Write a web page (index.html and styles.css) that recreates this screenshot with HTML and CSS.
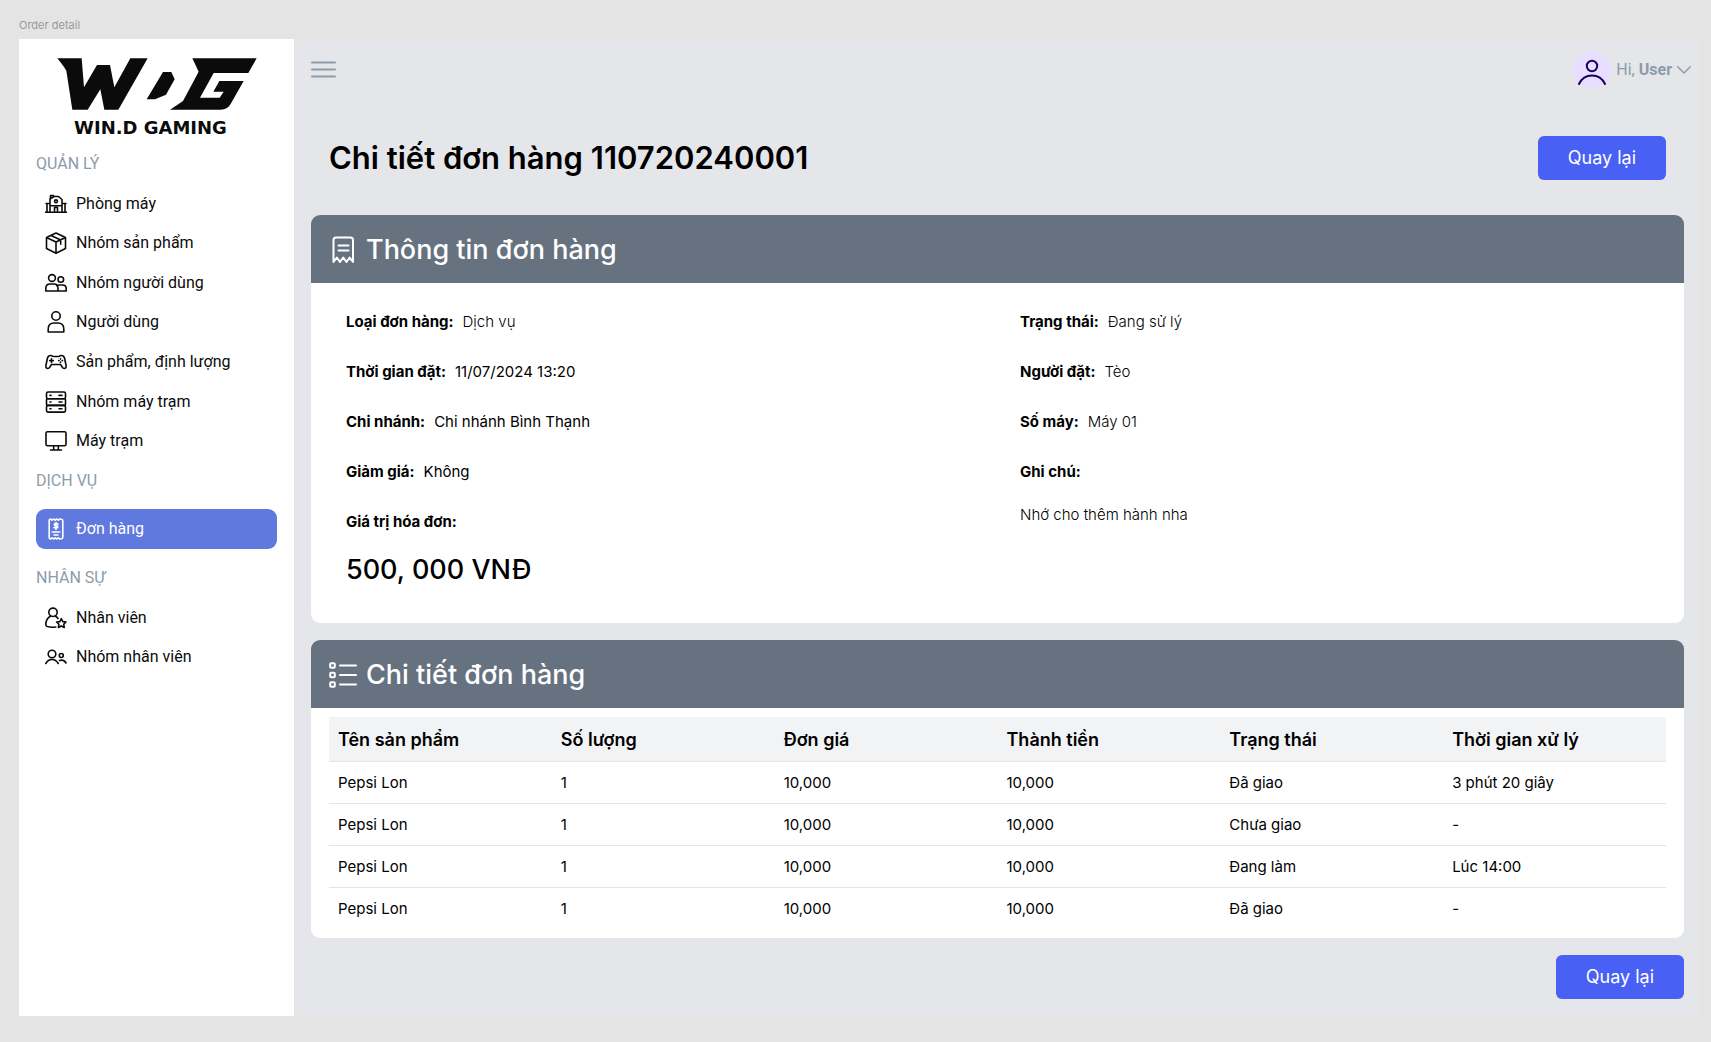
FILE: index.html
```html
<!DOCTYPE html>
<html lang="vi">
<head>
<meta charset="utf-8">
<meta name="viewport" content="width=device-width, initial-scale=1">
<title>Order detail</title>
<link rel="stylesheet" href="styles.css">
</head>
<body>
<div class="frame-label">Order detail</div>
<div class="frame">
  <aside class="sidebar">
    <div class="logo">
      <svg class="logo-mark" viewBox="169 174 600 156" aria-hidden="true">
        <path d="M170 175H243L250 262 289 195H328L341 262 389 175H441L353 329H311L299 268 261 329H215L197 212Q190 200 170 175Z"/>
        <path d="M487 216H512L522 238 496 284 463 298H438Z"/>
        <path d="M575 175H768L743 219H639L598 293H657L669 275H638L656 243H729L692 308Q682 329 660 329H508L547 303 594 215Z"/>
      </svg>
      <span class="logo-text">WIN.D GAMING</span>
    </div>
    <nav class="nav">
      <h2 class="nav-title">QUẢN LÝ</h2>
      <ul class="nav-list nav-list-manage">
        <li><a class="nav-item" href="#"><svg class="icon" viewBox="0 0 22 22"><path d="M1 10.500h4M17 10.500h4M0 19.200h22M2 10.500V19M5 8v11M17 8v11M20 10.500V19M5 8.500V6l4-2.500h4.500L17 6.500v2M5.500 6V2.500h3V4M9.500 19v-4.500h3V19M5 12.700h12"/><circle cx="11" cy="8.300" r="1.400"/></svg>Phòng máy</a></li>
        <li><a class="nav-item" href="#"><svg class="icon" viewBox="0 0 22 22"><path d="M11 1l9.500 4.500v11L11 21.200 1.500 16.500v-11zM1.500 5.500L11 10l9.500-4.500M11 10v11M6 3.400l9.700 4.500v4.300"/></svg>Nhóm sản phẩm</a></li>
        <li><a class="nav-item" href="#"><svg class="icon" viewBox="0 0 22 22"><circle cx="7" cy="6" r="3.400"/><circle cx="15.800" cy="7.500" r="2.800"/><path d="M.8 19v-2.500Q.8 12 5 12h4q4 0 4 4.500V19zM13 19h8.200v-2.500q0-3.500-3.700-3.500h-4.300q-1 .2-1.400.8"/></svg>Nhóm người dùng</a></li>
        <li><a class="nav-item" href="#"><svg class="icon" viewBox="0 0 22 22"><circle cx="11" cy="5" r="4.200"/><path d="M3.200 21v-3q0-6 6-6h3.600q6 0 6 6v3z"/></svg>Người dùng</a></li>
        <li><a class="nav-item" href="#"><svg class="icon" viewBox="0 0 22 22"><path d="M5.500 4.500q1.500 0 2.500 1h6q1-1 2.500-1 2.200 0 3 2.500l1.500 7q.5 3.500-1.600 3.500-1.400 0-2.400-1.700L15.500 13.500h-9L5 15.800q-1 1.700-2.400 1.700-2.100 0-1.600-3.500l1.500-7q.8-2.500 3-2.500zM6.500 7.800v3.600M4.700 9.600h3.600"/><path d="M15.500 7.700v.4M15.500 11.100v.4M13.700 9.600h.4M17.100 9.600h.4"/></svg>Sản phẩm, định lượng</a></li>
        <li><a class="nav-item" href="#"><svg class="icon" viewBox="0 0 22 22"><rect x="1.500" y="1" width="19" height="6.700" rx="1.500"/><rect x="1.500" y="7.700" width="19" height="6.700" rx="1"/><rect x="1.500" y="14.400" width="19" height="6.700" rx="1.500"/><path d="M5 4.400h1M14 4.400h3M5 11h1M14 11h3M5 17.700h1M14 17.700h3"/></svg>Nhóm máy trạm</a></li>
        <li><a class="nav-item" href="#"><svg class="icon" viewBox="0 0 22 22"><rect x="1" y="1.700" width="20" height="14" rx="1.500"/><path d="M8.700 15.700v4M13.300 15.700v4M5.500 20h11"/></svg>Máy trạm</a></li>
      </ul>
      <h2 class="nav-title">DỊCH VỤ</h2>
      <ul class="nav-list nav-list-service">
        <li><a class="nav-item active" href="#" aria-current="page"><svg class="icon" viewBox="0 0 22 22"><path d="M4.200 2.500Q4.200 1 5.500 1l1.600 1.200L8.600 1l1.600 1.200L11.800 1l1.500 1.200L14.900 1l1.500.2q1.400.3 1.400 1.800v16q0 1.500-1.400 1.800l-1.500.2-1.600-1.200-1.500 1.200-1.600-1.200L8.600 21l-1.500-1.200L5.500 21q-1.300-.3-1.300-1.500zM7.200 14h7.600M9 17h4M13 6.300Q11 4.800 9.700 5.800q-1 1.300 1.300 1.900 2.600.6 1.500 2Q11 10.800 9 9.400M11 4.500v7"/></svg>Đơn hàng</a></li>
      </ul>
      <h2 class="nav-title">NHÂN SỰ</h2>
      <ul class="nav-list">
        <li><a class="nav-item" href="#"><svg class="icon" viewBox="0 0 22 22"><circle cx="8" cy="5.300" r="4.200"/><path d="M5.600 9Q.8 12 .8 17.500q0 1.500 1.500 2 4 1.200 8.500.5M10.200 9q1.800 1 2.800 2.500M16.300 11.700l1.500 2.900 3.200.4-2.300 2.300.6 3.200-3-1.500-2.900 1.500.5-3.200-2.300-2.300 3.200-.4z"/></svg>Nhân viên</a></li>
        <li><a class="nav-item" href="#"><svg class="icon" viewBox="0 0 22 22"><circle cx="7" cy="8" r="3.800"/><circle cx="16.300" cy="9.500" r="2"/><path d="M.8 17.500q2.200-4 6.200-4t6.200 4M14.500 14.500q4.200-1.500 6.500 2.500"/></svg>Nhóm nhân viên</a></li>
      </ul>
    </nav>
  </aside>

  <main class="main">
    <header class="topbar">
      <button class="menu-button" type="button" aria-label="Menu"><svg viewBox="0 0 25 17"><path d="M1 1.500h23M1 8.500h23M1 15.500h23"/></svg></button>
      <button class="user-button" type="button">
        <span class="avatar"><svg viewBox="0 0 38 38"><circle cx="19" cy="15" r="5.200"/><path d="M6 33q4-8.500 13-8.500t13 8.500"/></svg></span>
        <span class="user-name">Hi, <strong>User</strong></span>
        <svg class="chevron" viewBox="0 0 14 8"><path d="M.7.7L7 7 13.300.7"/></svg>
      </button>
    </header>

    <div class="page-head">
      <h1 class="page-title">Chi tiết đơn hàng 110720240001</h1>
      <button class="button" type="button">Quay lại</button>
    </div>

    <section class="card">
      <h2 class="card-head">
        <svg class="card-icon" viewBox="0 0 28 28"><path d="M4.500 26V4q0-2.500 2.500-2.500h14.500Q24 1.500 24 4v22l-3.400-4.500-3.100 4.500-3.250-4.500-3.250 4.500-3.100-4.500zM9.500 9.500h10M9.500 14.500h10"/></svg>
        Thông tin đơn hàng
      </h2>
      <div class="details">
        <dl class="detail-column">
          <div class="detail"><dt>Loại đơn hàng:</dt><dd class="light">Dịch vụ</dd></div>
          <div class="detail"><dt>Thời gian đặt:</dt><dd>11/07/2024 13:20</dd></div>
          <div class="detail"><dt>Chi nhánh:</dt><dd>Chi nhánh Bình Thạnh</dd></div>
          <div class="detail"><dt>Giảm giá:</dt><dd>Không</dd></div>
          <div class="detail stacked"><dt>Giá trị hóa đơn:</dt><dd class="total">500, 000 VNĐ</dd></div>
        </dl>
        <dl class="detail-column">
          <div class="detail"><dt>Trạng thái:</dt><dd class="light">Đang sử lý</dd></div>
          <div class="detail"><dt>Người đặt:</dt><dd class="light">Tèo</dd></div>
          <div class="detail"><dt>Số máy:</dt><dd class="light">Máy 01</dd></div>
          <div class="detail stacked"><dt>Ghi chú:</dt><dd class="light">Nhớ cho thêm hành nha</dd></div>
        </dl>
      </div>
    </section>

    <section class="card">
      <h2 class="card-head">
        <svg class="card-icon" viewBox="0 0 28 28"><rect x="1.200" y="2.200" width="4.600" height="4.600" rx="1"/><rect x="1.200" y="11.700" width="4.600" height="4.600" rx="1"/><rect x="1.200" y="21.200" width="4.600" height="4.600" rx="1"/><path d="M11 4.500H27M11 14H27M11 23.500H27"/></svg>
        Chi tiết đơn hàng
      </h2>
      <div class="table-wrap">
        <table class="table">
          <thead>
            <tr><th scope="col">Tên sản phẩm</th><th scope="col">Số lượng</th><th scope="col">Đơn giá</th><th scope="col">Thành tiền</th><th scope="col">Trạng thái</th><th scope="col">Thời gian xử lý</th></tr>
          </thead>
          <tbody>
            <tr><td>Pepsi Lon</td><td>1</td><td>10,000</td><td>10,000</td><td>Đã giao</td><td>3 phút 20 giây</td></tr>
            <tr><td>Pepsi Lon</td><td>1</td><td>10,000</td><td>10,000</td><td>Chưa giao</td><td>-</td></tr>
            <tr><td>Pepsi Lon</td><td>1</td><td>10,000</td><td>10,000</td><td>Đang làm</td><td>Lúc 14:00</td></tr>
            <tr><td>Pepsi Lon</td><td>1</td><td>10,000</td><td>10,000</td><td>Đã giao</td><td>-</td></tr>
          </tbody>
        </table>
      </div>
    </section>

    <div class="page-foot">
      <button class="button" type="button">Quay lại</button>
    </div>
  </main>
</div>
</body>
</html>
```
FILE: styles.css
```css
* {
  box-sizing: border-box;
}

body {
  margin: 0;
  padding: 18px 10px 26px 19px;
  background: #e4e4e4;
  color: #000;
  font-family: Inter, "Liberation Sans", sans-serif;
  font-size: 15px;
  line-height: 20px;
}

h1, h2, ul, dl, dd {
  margin: 0;
  padding: 0;
}

button {
  border: 0;
  padding: 0;
  background: none;
  font: inherit;
  cursor: pointer;
}

svg {
  display: block;
  flex: none;
  fill: none;
  stroke: currentColor;
  stroke-linecap: round;
  stroke-linejoin: round;
}

.frame-label {
  height: 21px;
  color: #999;
  font-size: 11px;
  line-height: 14px;
}

.frame {
  display: flex;
  min-height: calc(100vh - 65px);
  background: #e5e6ea;
}

/* Sidebar */

.sidebar {
  flex: none;
  width: 275px;
  padding: 19px 17px;
  background: #fff;
  font-family: Roboto, "Liberation Sans", sans-serif;
}

.logo {
  display: flex;
  flex-direction: column;
  align-items: center;
  color: #0b0b0b;
}

.logo-mark {
  width: 200px;
  height: 52px;
  fill: currentColor;
  stroke: none;
}

.logo-text {
  padding-top: 8px;
  padding-right: 12px;
  font-family: "DejaVu Sans", sans-serif;
  font-size: 18px;
  font-weight: 700;
  line-height: 20px;
}

.nav {
  padding-top: 6px;
}

.nav-title {
  padding-top: 10px;
  color: #8d9bab;
  font-size: 16px;
  font-weight: 400;
  line-height: 20px;
}

.nav-list {
  display: grid;
  grid-auto-rows: 1fr;
  padding-top: 10px;
  list-style: none;
}

.nav-list-manage {
  min-height: 287px;
}

.nav-list-service {
  padding: 18px 0 9px;
}

.nav-item {
  display: flex;
  align-items: center;
  gap: 9px;
  height: 100%;
  min-height: 39px;
  padding: 0 9px;
  border-radius: 9px;
  color: #0b0b0b;
  font-size: 16px;
  text-decoration: none;
}

.nav-item.active {
  min-height: 40px;
  background: #6079df;
  color: #fff;
}

.icon {
  width: 22px;
  height: 22px;
  stroke-width: 1.6;
}

/* Top bar */

.main {
  flex: 1;
  min-width: 0;
  padding: 0 17px 17px;
}

.topbar {
  display: flex;
  align-items: center;
  justify-content: space-between;
  height: 61px;
  color: #8d9bab;
}

.menu-button,
.user-button {
  color: inherit;
}

.menu-button svg {
  width: 25px;
  height: 17px;
  stroke-width: 2;
}

.user-button {
  display: flex;
  align-items: center;
  gap: 5px;
  margin-right: -7px;
  font-family: Roboto, "Liberation Sans", sans-serif;
  font-size: 16px;
}

.user-name strong {
  font-weight: 700;
}

.avatar {
  border-radius: 50%;
  background: #e8deff;
  color: #21005d;
}

.avatar svg {
  width: 38px;
  height: 38px;
  stroke-width: 2;
}

.chevron {
  width: 14px;
  height: 8px;
  stroke-width: 1.4;
}

/* Page content */

.page-head {
  display: flex;
  align-items: center;
  justify-content: space-between;
  padding: 36px 18px 35px;
}

.page-title {
  font-size: 31px;
  font-weight: 600;
  line-height: 40px;
}

.button {
  padding: 12px 30px;
  border-radius: 6px;
  background: #4960f5;
  color: #fff;
  font-size: 18px;
}

.card {
  margin-bottom: 17px;
  border-radius: 9px;
  background: #fff;
  overflow: hidden;
}

.card-head {
  display: flex;
  align-items: center;
  gap: 9px;
  padding: 20px 18px 18px;
  background: #677280;
  color: #fff;
  font-size: 27px;
  font-weight: 500;
  line-height: 30px;
}

.card-icon {
  width: 28px;
  height: 28px;
  stroke-width: 2;
}

.details {
  display: grid;
  grid-template-columns: 1fr 1fr;
  column-gap: 45px;
  padding: 29px 35px 38px;
}

.detail-column {
  display: flex;
  flex-direction: column;
  gap: 30px;
}

.detail {
  display: flex;
  gap: 9px;
}

.detail.stacked {
  flex-direction: column;
  gap: 23px;
}

.detail dt {
  font-weight: 700;
}

.detail .light {
  font-weight: 300;
}

.detail .total {
  font-size: 27px;
  font-weight: 500;
  line-height: 30px;
}

.table-wrap {
  padding: 9px 18px;
}

.table {
  width: 100%;
  table-layout: fixed;
  border-collapse: collapse;
}

.table th,
.table td {
  padding: 11px 9px 10px;
  border-bottom: 1px solid #e3e5e9;
  text-align: left;
}

.table th {
  padding: 12px 9px 10px;
  background: #f2f3f5;
  font-size: 18px;
  font-weight: 600;
  line-height: 22px;
}

.table tbody tr:last-child td {
  border-bottom: 0;
}

.page-foot {
  display: flex;
  justify-content: flex-end;
}
```
